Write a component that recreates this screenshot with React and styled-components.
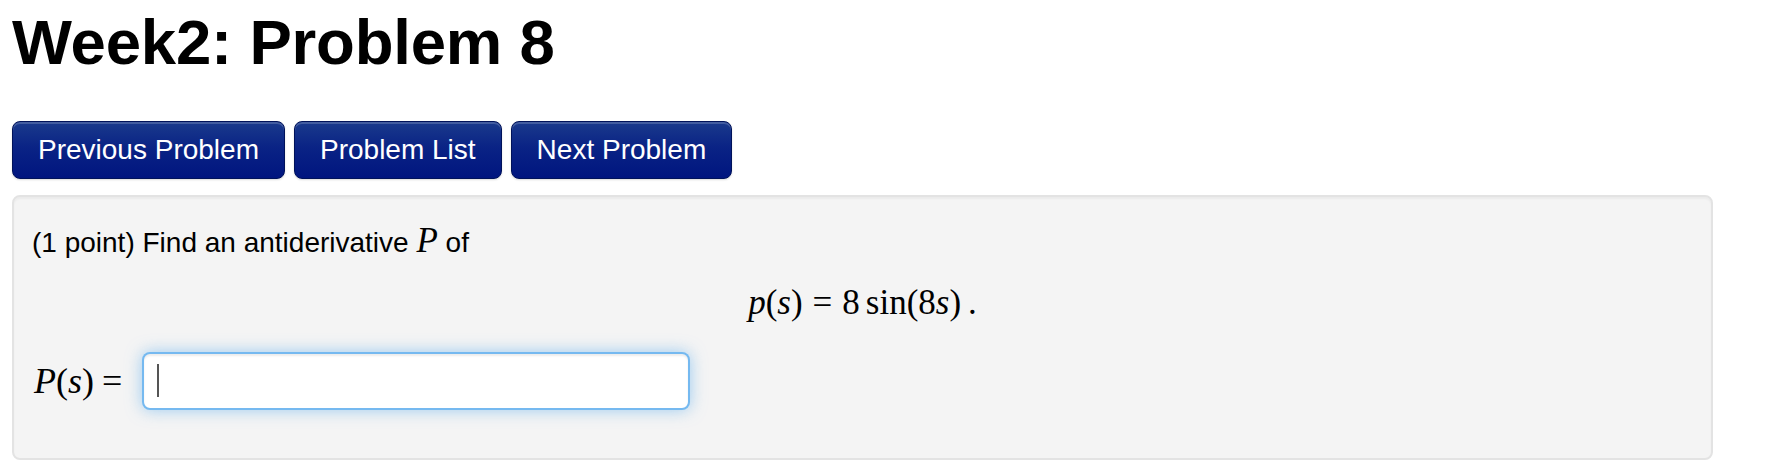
import styled, { createGlobalStyle } from 'styled-components'

const Global = createGlobalStyle`
    html, body {
        margin:0;
        padding:0;
        background:#fff;
    }
    body {
        font-family:"Liberation Sans", Arial, sans-serif;
        color:#000;
    }
`

const Page = styled.div`
    padding:6px 57px 0 12px;
`

const Title = styled.h1`
    margin:0 0 43px 0;
    font-size:63.5px;
    font-weight:bold;
    line-height:72px;
    letter-spacing:-0.2px;
`

const Nav = styled.div`
    display:flex;
    gap:9px;
    margin-bottom:16px;
`

const NavButton = styled.button`
    font-family:"Liberation Sans", Arial, sans-serif;
    font-size:28px;
    line-height:40px;
    color:#fff;
    padding:8px 25px;
    border:1px solid #00125a;
    border-radius:8px;
    background:linear-gradient(to bottom, #1a3a8c 0%, #0a2385 45%, #00157f 100%);
    box-shadow:inset 0 2px 0 rgba(255,255,255,.18), 0 1px 2px rgba(0,0,0,.15);
    cursor:pointer;
`

const Panel = styled.div`
    background:#f4f4f4;
    border:2px solid #e3e3e3;
    border-radius:8px;
    padding:24px 18px 48px 18px;
    box-shadow:inset 0 2px 2px rgba(0,0,0,.04);
`

const Line = styled.div`
    font-size:28px;
    line-height:40px;
`

const MathVar = styled.span`
    font-family:"Liberation Serif", "Times New Roman", serif;
    font-style:italic;
    font-size:35px;
`

const Display = styled.div`
    margin:20px 0 0 0;
    text-align:center;
    font-family:"Liberation Serif", "Times New Roman", serif;
    font-size:35px;
    line-height:40px;
`

const Op = styled.span`
    margin:0 ${p => p.$right ?? 10}px 0 ${p => p.$left ?? 10}px;
`

const I = styled.i`
    font-style:italic;
`

const AnswerRow = styled.div`
    display:flex;
    align-items:center;
    gap:20px;
    margin-top:${p => p.$top || 0}px;
`

const Label = styled.span`
    font-family:"Liberation Serif", "Times New Roman", serif;
    font-size:36px;
    line-height:40px;
    padding-left:2px;
`

const Field = styled.div`
    position:relative;
    width:548px;
    height:58px;
    box-sizing:border-box;
    background:#fff;
    border:2px solid rgba(82,168,236,.8);
    border-radius:8px;
    box-shadow:inset 0 2px 2px rgba(0,0,0,.075), 0 0 16px rgba(82,168,236,.55);
`

const Input = styled.input`
    width:100%;
    height:100%;
    box-sizing:border-box;
    border:none;
    outline:none;
    background:transparent;
    font-size:28px;
    padding:0 12px;
    font-family:"Liberation Sans", Arial, sans-serif;
`

const Caret = styled.span`
    position:absolute;
    left:13px;
    top:10px;
    width:2px;
    height:33px;
    background:#555;
`

const App = () => {
    return <Page>
        <Global />
        <Title>Week2: Problem 8</Title>

        <Nav>
            <NavButton>Previous Problem</NavButton>
            <NavButton>Problem List</NavButton>
            <NavButton>Next Problem</NavButton>
        </Nav>

        <Panel>
            <Line>(1 point) Find an antiderivative <MathVar>P</MathVar> of</Line>

            <Display>
                <I>p</I>(<I>s</I>)<Op>=</Op>8<Op $left={6} $right={0}>sin</Op>(8<I>s</I>)<Op $left={7} $right={0}>.</Op>
            </Display>

            <AnswerRow $top={29}>
                <Label><I>P</I>(<I>s</I>)<Op $left={8} $right={0}>=</Op></Label>
                <Field>
                    <Input type="text" aria-label="answer" />
                    <Caret />
                </Field>
            </AnswerRow>
        </Panel>
    </Page>
}

export default App
